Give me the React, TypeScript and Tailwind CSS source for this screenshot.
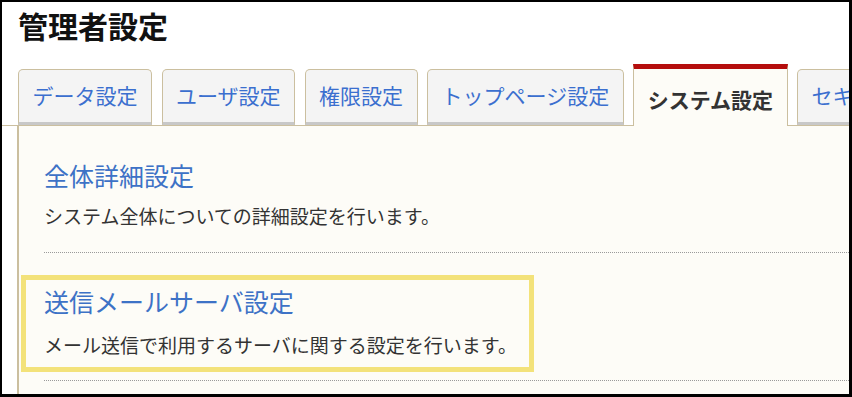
import React from "react";

type Tab = { label: string; active?: boolean };

const tabs: Tab[] = [
  { label: "データ設定" },
  { label: "ユーザ設定" },
  { label: "権限設定" },
  { label: "トップページ設定" },
  { label: "システム設定", active: true },
  { label: "セキュリティ設定" },
];

const items = [
  { title: "全体詳細設定", desc: "システム全体についての詳細設定を行います。" },
  { title: "送信メールサーバ設定", desc: "メール送信で利用するサーバに関する設定を行います。", marked: true },
];

const font = { fontFamily: '"Noto Sans CJK JP", "Noto Sans", sans-serif' };

export default function App() {
  return (
    <div
      className="w-[852px] h-[397px] overflow-hidden bg-white border-l-2 border-t-2 border-r-[3px] border-b-[3px] border-black flex flex-col"
      style={font}
    >
      {/* 見出し */}
      <h1 className="pl-[16px] pt-[5px] text-[30px] leading-[36px] font-bold text-[#111] whitespace-nowrap">
        管理者設定
      </h1>

      {/* タブ */}
      <div className="mt-[21px] pl-[16px] flex items-end gap-[9.5px] border-b border-[#cbbf9f] whitespace-nowrap">
        {tabs.map((t) =>
          t.active ? (
            <div
              key={t.label}
              className="flex-none h-[62px] -mb-px px-[13.5px] pt-[5px] flex items-center bg-[#fdfcf7] border-t-[5px] border-t-[#b50d0d] border-x border-x-[#cbbf9f] text-[21px] font-bold text-[#333]"
            >
              {t.label}
            </div>
          ) : (
            <div
              key={t.label}
              className="flex-none h-[56px] px-[13.5px] flex items-center bg-[#f4f4f4] border border-[#cbbf9f] border-b-[3px] border-b-[#c8c8c8] rounded-t-[5px] text-[21px] text-[#3b6fcf]"
            >
              {t.label}
            </div>
          )
        )}
      </div>

      {/* パネル */}
      <div className="flex-1 ml-[15px] bg-[#fdfcf7] border-l-2 border-[#cbbf9f] pl-[25px]">
        {items.map((it, i) => (
          <div
            key={it.title}
            className={
              "relative border-b border-dotted border-[#9a9a9a] " +
              (i === 0 ? "pt-[31px] pb-[22px]" : "pt-[30px] pb-[21px]")
            }
          >
            {it.marked && (
              <span className="absolute left-[-23px] top-[22px] w-[513px] h-[97px] border-[5px] border-[#f3e27a]" />
            )}
            <div className="text-[25px] leading-[36px] text-[#3d72c6] whitespace-nowrap">{it.title}</div>
            <div
              className={
                "text-[19px] leading-[28px] text-[#333] whitespace-nowrap " +
                (i === 0 ? "mt-[9px]" : "mt-[12px]")
              }
            >
              {it.desc}
            </div>
          </div>
        ))}
      </div>
    </div>
  );
}
